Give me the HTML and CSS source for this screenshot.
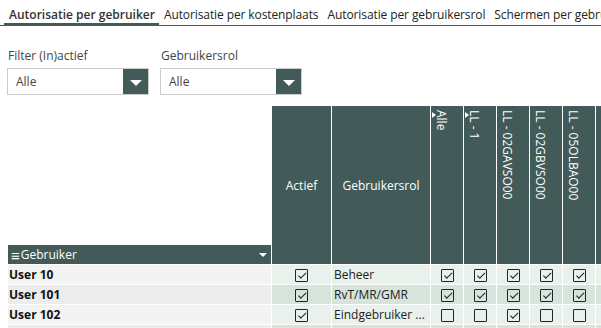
FILE: index.html
```html
<!DOCTYPE html>
<html lang="nl">
<head>
    <meta charset="UTF-8">
    <meta name="viewport" content="width=device-width, initial-scale=1.0">
    <title>Autorisatie per gebruiker</title>
    <link rel="stylesheet" href="styles.css">
</head>
<body>
    <nav class="tabs">
        <a href="#" class="tab active">Autorisatie per gebruiker</a>
        <a href="#" class="tab">Autorisatie per kostenplaats</a>
        <a href="#" class="tab">Autorisatie per gebruikersrol</a>
        <a href="#" class="tab">Schermen per gebruikersrol</a>
    </nav>

    <div class="filters">
        <div class="filter">
            <label>Filter (In)actief</label>
            <div class="select">
                <span class="select-value">Alle</span>
                <span class="select-button"><span class="caret"></span></span>
            </div>
        </div>
        <div class="filter">
            <label>Gebruikersrol</label>
            <div class="select">
                <span class="select-value">Alle</span>
                <span class="select-button"><span class="caret"></span></span>
            </div>
        </div>
    </div>

    <div class="grid-wrap">
        <table class="grid">
            <thead>
                <tr>
                    <th class="col-user">
                        <div class="user-head">
                            <span class="menu-icon">&#8801;</span>Gebruiker
                            <span class="head-caret"></span>
                        </div>
                    </th>
                    <th class="col-actief head">Actief</th>
                    <th class="col-rol head">Gebruikersrol</th>
                    <th class="col-kp head vert"><span class="arrow"></span><span>Alle</span></th>
                    <th class="col-kp head vert"><span class="arrow"></span><span>LL - 1</span></th>
                    <th class="col-kp head vert"><span>LL - 02GAVSO00</span></th>
                    <th class="col-kp head vert"><span>LL - 02GBVSO00</span></th>
                    <th class="col-kp head vert"><span>LL - 05OLBAO00</span></th>
                    <th class="col-kp head vert"><span>LL - 06</span></th>
                </tr>
            </thead>
            <tbody>
                <tr>
                    <td class="user">User 10</td>
                    <td class="cell center"><span class="check on"></span></td>
                    <td class="cell rol">Beheer</td>
                    <td class="cell center"><span class="check on"></span></td>
                    <td class="cell center"><span class="check on"></span></td>
                    <td class="cell center"><span class="check on"></span></td>
                    <td class="cell center"><span class="check on"></span></td>
                    <td class="cell center"><span class="check on"></span></td>
                    <td class="cell center"><span class="check on"></span></td>
                </tr>
                <tr class="alt">
                    <td class="user">User 101</td>
                    <td class="cell center"><span class="check on"></span></td>
                    <td class="cell rol">RvT/MR/GMR</td>
                    <td class="cell center"><span class="check on"></span></td>
                    <td class="cell center"><span class="check on"></span></td>
                    <td class="cell center"><span class="check on"></span></td>
                    <td class="cell center"><span class="check on"></span></td>
                    <td class="cell center"><span class="check on"></span></td>
                    <td class="cell center"><span class="check on"></span></td>
                </tr>
                <tr>
                    <td class="user">User 102</td>
                    <td class="cell center"><span class="check on"></span></td>
                    <td class="cell rol">Eindgebruiker ...</td>
                    <td class="cell center"><span class="check"></span></td>
                    <td class="cell center"><span class="check"></span></td>
                    <td class="cell center"><span class="check on"></span></td>
                    <td class="cell center"><span class="check"></span></td>
                    <td class="cell center"><span class="check"></span></td>
                    <td class="cell center"><span class="check"></span></td>
                </tr>
                <tr class="alt">
                    <td class="user">User 103</td>
                    <td class="cell center"><span class="check on"></span></td>
                    <td class="cell rol">Beheer</td>
                    <td class="cell center"><span class="check on"></span></td>
                    <td class="cell center"><span class="check on"></span></td>
                    <td class="cell center"><span class="check on"></span></td>
                    <td class="cell center"><span class="check on"></span></td>
                    <td class="cell center"><span class="check on"></span></td>
                    <td class="cell center"><span class="check on"></span></td>
                </tr>
            </tbody>
        </table>
    </div>
</body>
</html>
```

FILE: styles.css
```css
body {
    font-family: 'Open Sans', 'Liberation Sans', sans-serif;
    margin: 0;
    padding: 0;
    background-color: #fff;
    color: #222;
    font-size: 12px;
    overflow: hidden;
    width: 601px;
    height: 328px;
}

/* tabs */
.tabs {
    display: flex;
    align-items: flex-end;
    height: 25px;
    border-bottom: 1px solid #425b58;
    padding-left: 4px;
    white-space: nowrap;
    overflow: hidden;
}

.tab {
    color: #222;
    text-decoration: none;
    padding: 0 4px 0 5px;
    font-size: 12px;
    line-height: 16px;
    letter-spacing: -0.1px;
    border-bottom: 3px solid transparent;
    margin-bottom: -1px;
}

.tab.active {
    font-weight: 600;
    color: #333;
    letter-spacing: 0;
    border-bottom-color: #425b58;
}

/* filters */
.filters {
    display: flex;
    gap: 11px;
    padding: 22px 0 0 7px;
}

.filter label {
    display: block;
    color: #444;
    font-size: 12px;
    line-height: 16px;
    margin-bottom: 4px;
    padding-left: 1px;
}

.select {
    display: flex;
    width: 140px;
    height: 25px;
    border: 1px solid #ccc;
}

.select-value {
    flex: 1;
    padding-left: 8px;
    line-height: 25px;
    color: #444;
}

.select-button {
    width: 25px;
    background-color: #425b58;
    display: flex;
    align-items: center;
    justify-content: center;
}

.caret {
    width: 0;
    height: 0;
    border-left: 6px solid transparent;
    border-right: 6px solid transparent;
    border-top: 6px solid #fff;
    margin-top: 2px;
}

/* grid */
.grid-wrap {
    margin-top: 10px;
    margin-left: 7px;
}

.grid {
    border-collapse: separate;
    border-spacing: 1px;
    table-layout: fixed;
    width: 622px;
}

.grid th {
    padding: 0;
    font-weight: normal;
}

.col-user {
    width: 263px;
    vertical-align: bottom;
    background: #fff;
}

.user-head {
    height: 19px;
    background-color: #425b58;
    color: #fff;
    display: flex;
    align-items: center;
    font-size: 12px;
    position: relative;
}

.menu-icon {
    font-size: 15px;
    line-height: 14px;
    font-weight: 700;
    margin: 0 1px 0 3px;
}

.head-caret {
    position: absolute;
    right: 4px;
    top: 8px;
    border-left: 4px solid transparent;
    border-right: 4px solid transparent;
    border-top: 4px solid #fff;
}

.head {
    background-color: #425b58;
    color: #fff;
    height: 158px;
    font-size: 12px;
}

.col-actief {
    width: 59px;
}

.col-rol {
    width: 98px;
}

.col-kp {
    width: 32px;
}

.vert {
    vertical-align: top;
    text-align: left;
    position: relative;
}

.vert span:last-child {
    display: block;
    writing-mode: vertical-rl;
    font-size: 12px;
    line-height: 14px;
    margin: 4px 0 0 3px;
    white-space: nowrap;
}

.arrow {
    position: absolute;
    left: 1px;
    top: 6px;
    border-top: 3px solid transparent;
    border-bottom: 3px solid transparent;
    border-left: 4px solid #fff;
}

.grid td {
    height: 19px;
    padding: 0;
}

.user {
    background-color: #f3f3f3;
    font-weight: 700;
    color: #111;
    padding-left: 1px !important;
}

.alt .user {
    background-color: #ececec;
}

.cell {
    background-color: #e8f1ec;
}

.alt .cell {
    background-color: #d6e4db;
}

.center {
    text-align: center;
}

.rol {
    padding-left: 2px !important;
    color: #222;
    white-space: nowrap;
}

.check {
    display: inline-block;
    width: 11px;
    height: 11px;
    border: 1px solid #1d2530;
    border-radius: 1px;
    vertical-align: middle;
    position: relative;
}

.check.on::after {
    content: '';
    position: absolute;
    left: 2px;
    top: 6px;
    width: 7px;
    height: 3px;
    border-left: 1px solid #1d2530;
    border-bottom: 1px solid #1d2530;
    transform: rotate(-45deg);
    transform-origin: left top;
}
```
